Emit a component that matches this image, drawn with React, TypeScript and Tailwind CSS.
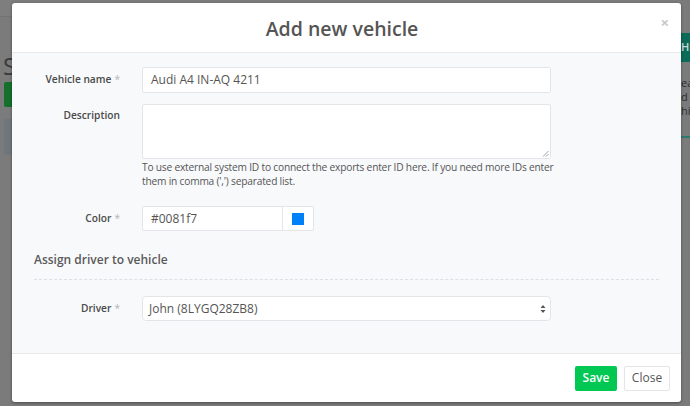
export default function App() {
  return (
    <div className="relative h-[406px] w-[690px] overflow-hidden bg-[#7b7b7b] font-['Open_Sans',sans-serif]">
      {/* page behind the overlay */}
      <div className="flex h-full justify-between">
        <div className="flex w-[12px] flex-col">
          <div className="h-[17px] border-b border-[#747474] bg-[#7e7e7e]" />
          <div className="ml-[3px] mt-[37px] text-[24px] leading-[24px] text-[#3a3a3a]">S</div>
          <div className="ml-[4px] mt-[4px] h-[25px] rounded-l-[2px] bg-[#14702b]" />
          <div className="ml-[4px] mt-[12px] h-[36px] rounded-l-[3px] bg-[#6f777d]" />
        </div>
        <div className="flex w-[9px] flex-col">
          <div className="h-[33px]" />
          <div className="flex h-[29px] items-center bg-[#0b6b58] text-[11px] font-semibold text-[#cfd8d6]">Hi</div>
          <div className="mt-[14px] flex flex-col text-[11px] leading-[14px] text-[#2e2e2e]">
            <span>eas</span>
            <span>d</span>
            <span>hic</span>
          </div>
          <div className="mt-[18px] h-[2px] bg-[#2e7a6e]" />
        </div>
      </div>

      {/* modal */}
      <div className="absolute left-[12px] top-[3px] flex h-[399px] w-[669px] flex-col overflow-hidden rounded-[3px] bg-white shadow-[0_1px_3px_rgba(0,0,0,0.4)]">
        <div className="relative flex h-[50px] shrink-0 items-center justify-center border-b border-[#e6e8ea] pt-[2px]">
          <h2 className="mr-[9px] text-[19.5px] font-semibold text-[#555]">Add new vehicle</h2>
          <span className="absolute right-[12px] top-[8px] text-[15px] font-bold text-[#c8c8c8]">×</span>
        </div>

        <div className="flex h-[301px] shrink-0 flex-col border-b border-[#e6e8ea] bg-[#f8f9fb] pl-[22px] pr-[22px] pt-[14px] text-[#555]">
          <div className="flex items-center">
            <Label text="Vehicle name" />
            <div className="flex h-[26px] w-[409px] items-center rounded-[2px] border border-[#e3e5e8] bg-white px-[8px] text-[12px]">
              Audi A4 IN-AQ 4211
            </div>
          </div>

          <div className="mt-[11px] flex items-start">
            <div className="pt-[4px]">
              <Label text="Description" req={false} />
            </div>
            <div className="flex w-[409px] flex-col">
              <div className="relative h-[55px] rounded-[2px] border border-[#e3e5e8] bg-white">
                <svg className="absolute bottom-[1px] right-[1px]" width="7" height="7" viewBox="0 0 7 7">
                  <path d="M6.5 1 L1 6.5 M6.5 4 L4 6.5" stroke="#888" strokeWidth="0.8" />
                </svg>
              </div>
              <p className="mt-[1px] whitespace-nowrap text-[10.2px] leading-[14px] tracking-[-0.2px] text-[#555]">
                To use external system ID to connect the exports enter ID here. If you need more IDs enter
                <br />
                them in comma (',') separated list.
              </p>
            </div>
          </div>

          <div className="mt-[18px] flex items-center">
            <Label text="Color" />
            <div className="flex h-[25px] w-[172px] rounded-[2px] border border-[#e3e5e8] bg-white text-[12px]">
              <div className="flex flex-1 items-center px-[8px]">#0081f7</div>
              <div className="flex w-[31px] items-center justify-center border-l border-[#e3e5e8]">
                <div className="h-[12px] w-[12px] bg-[#0081f7]" />
              </div>
            </div>
          </div>

          <div className="mt-[21px] text-[12px] font-semibold leading-[16px] text-[#5a5a5a]">
            Assign driver to vehicle
          </div>
          <div className="mt-[11px] border-t border-dashed border-[#dcdfe3]" />

          <div className="mt-[16px] flex items-center">
            <Label text="Driver" />
            <div className="flex h-[25px] w-[409px] items-center justify-between rounded-[4px] border border-[#e3e5e8] bg-white pl-[6px] pr-[4px] text-[12px]">
              <span>John (8LYGQ28ZB8)</span>
              <svg width="6" height="10" viewBox="0 0 6 10">
                <path d="M3 1 L5.5 4 L0.5 4 Z M3 9 L5.5 6 L0.5 6 Z" fill="#555" />
              </svg>
            </div>
          </div>
        </div>

        <div className="flex flex-1 items-center justify-end gap-[7px] pr-[11px]">
          <button className="flex h-[25px] w-[42px] items-center justify-center rounded-[2px] bg-[#00c853] text-[12px] font-semibold text-white">
            Save
          </button>
          <button className="flex h-[25px] w-[46px] items-center justify-center rounded-[2px] border border-[#e3e5e8] bg-white text-[12px] text-[#555]">
            Close
          </button>
        </div>
      </div>
    </div>
  )
}

function Label({ text, req = true }: { text: string; req?: boolean }) {
  return (
    <div className="mr-[22px] w-[86px] shrink-0 text-right text-[10.2px] font-semibold text-[#4a4a4a]">
      {text}
      {req && <span className="ml-[3px] font-normal text-[#b5b5b5]">*</span>}
    </div>
  )
}
